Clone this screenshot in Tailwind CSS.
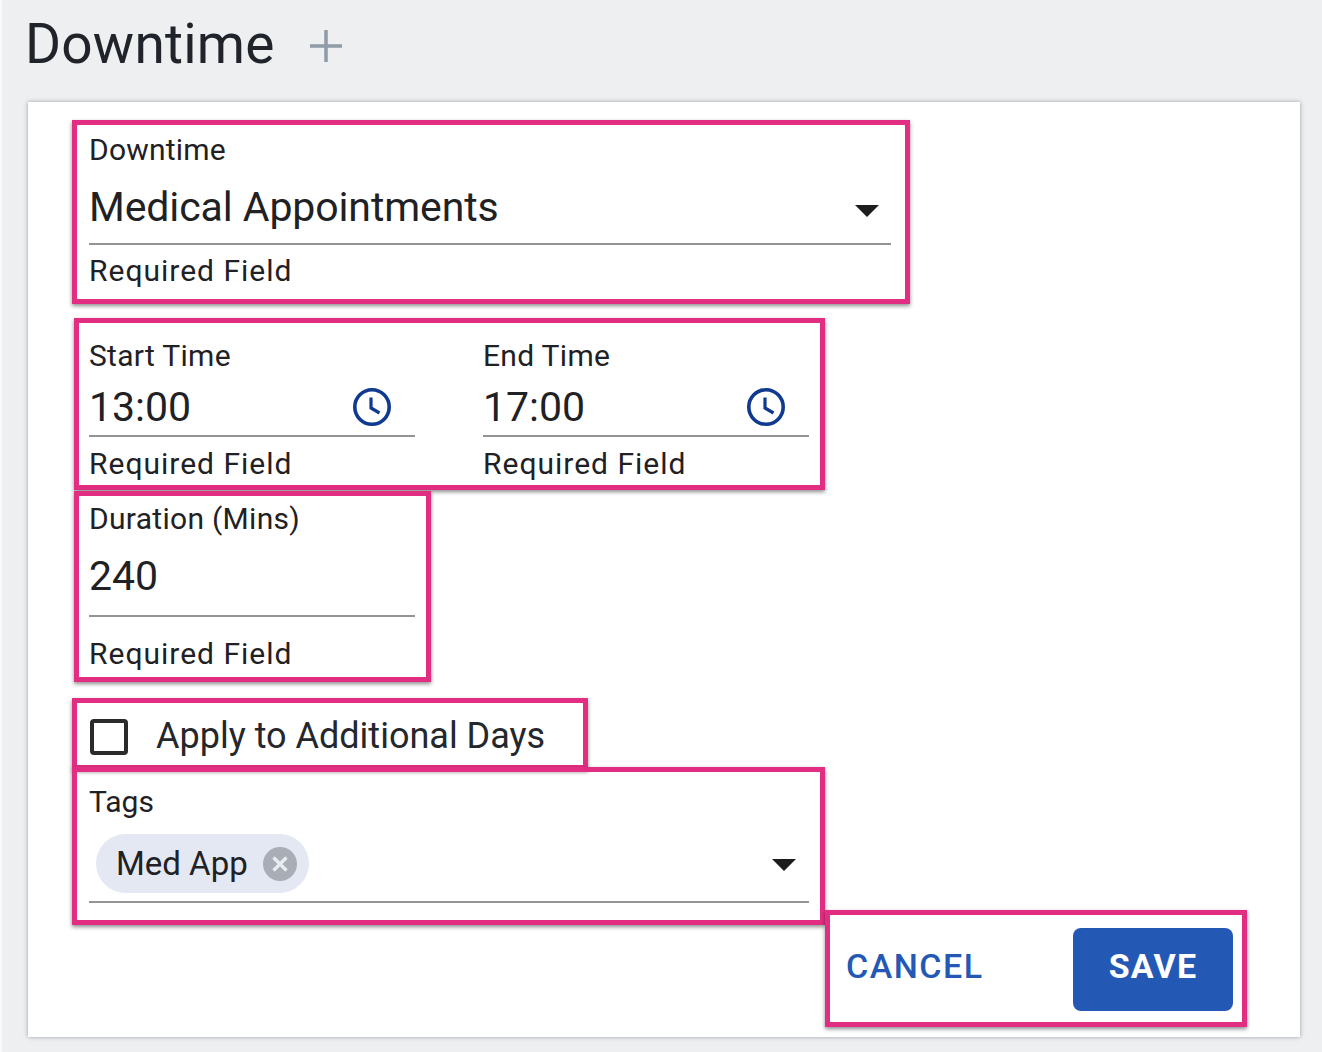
<!doctype html>
<html>
<head>
<meta charset="utf-8">
<script src="https://cdn.jsdelivr.net/npm/@tailwindcss/browser@4"></script>
</head>
<body class="m-0">
<div class="relative w-[1322px] h-[1052px] overflow-hidden bg-[#eeeff1] border-l-2 border-[#f8f9fa] font-['Roboto',sans-serif] text-[#1f2124]">
  <header class="h-[102px] pl-[23px] pt-[13px] flex items-start">
    <h1 class="text-[55px] leading-[62px] font-normal tracking-[0.2px] text-[#20242a]">Downtime</h1>
    <svg class="ml-[33px] mt-[15px] w-[36px] h-[36px]" viewBox="0 0 36 36" fill="none" stroke="#8f9ba6" stroke-width="3.5"><path d="M18 2v32M2 18h32"/></svg>
  </header>

  <main class="ml-[26px] w-[1272px] h-[935px] bg-white shadow-[0_0_4px_rgba(90,100,110,0.6)] pl-[61px] pt-[30px] flex flex-col">
    <section class="w-[802px] h-[165px] shrink-0 flex flex-col">
      <label class="text-[30px] leading-[36px] h-[36px] shrink-0 tracking-[0.2px]">Downtime</label>
      <div class="h-[77px] shrink-0 border-b-2 border-[#949494] flex items-center justify-between pr-[12px] pt-[3px]">
        <span class="text-[41px] leading-[50px] tracking-[-0.1px]">Medical Appointments</span>
        <svg class="w-[24px] h-[14px] mt-[7px]" viewBox="0 0 24 14"><path d="M0 1h24L12 13z" fill="#1d1d1d"/></svg>
      </div>
      <p class="text-[30px] leading-[36px] mt-[8px] tracking-[1px]">Required Field</p>
    </section>

    <section class="mt-[41px] flex gap-[68px] shrink-0">
      <div class="w-[326px] flex flex-col">
        <label class="text-[30px] leading-[36px] h-[36px] shrink-0 tracking-[0.3px]">Start Time</label>
        <div class="h-[63px] shrink-0 border-b-2 border-[#949494] flex items-center justify-between pr-[23px] pt-[5px]">
          <span class="text-[41px] leading-[50px]">13:00</span>
          <svg class="w-[40px] h-[40px]" viewBox="0 0 40 40" fill="none" stroke="#0f3a8f" stroke-width="3.6"><circle cx="20" cy="20" r="17.2"/><path d="M19 10.5V21l8.5 5" stroke-width="3.2"/></svg>
        </div>
        <p class="text-[30px] leading-[36px] mt-[9px] tracking-[1px]">Required Field</p>
      </div>
      <div class="w-[326px] flex flex-col">
        <label class="text-[30px] leading-[36px] h-[36px] shrink-0 tracking-[0.3px]">End Time</label>
        <div class="h-[63px] shrink-0 border-b-2 border-[#949494] flex items-center justify-between pr-[23px] pt-[5px]">
          <span class="text-[41px] leading-[50px]">17:00</span>
          <svg class="w-[40px] h-[40px]" viewBox="0 0 40 40" fill="none" stroke="#0f3a8f" stroke-width="3.6"><circle cx="20" cy="20" r="17.2"/><path d="M19 10.5V21l8.5 5" stroke-width="3.2"/></svg>
        </div>
        <p class="text-[30px] leading-[36px] mt-[9px] tracking-[1px]">Required Field</p>
      </div>
    </section>

    <section class="mt-[19px] w-[326px] shrink-0 flex flex-col">
      <label class="text-[30px] leading-[36px] h-[36px] shrink-0 whitespace-nowrap tracking-[0.3px]">Duration (Mins)</label>
      <div class="h-[80px] shrink-0 border-b-2 border-[#949494] flex items-center">
        <span class="text-[41px] leading-[50px]">240</span>
      </div>
      <p class="text-[30px] leading-[36px] mt-[19px] tracking-[1px]">Required Field</p>
    </section>

    <section class="mt-[46px] h-[38px] shrink-0 flex items-center">
      <span class="ml-[1px] w-[38px] h-[36px] border-[4px] border-[#2b2b2b] rounded-[4px]"></span>
      <span class="ml-[28px] -mt-[3px] text-[36px] leading-[44px] text-[#24272c]">Apply to Additional Days</span>
    </section>

    <section class="mt-[28px] w-[720px] shrink-0 flex flex-col">
      <label class="text-[30px] leading-[36px] h-[36px] shrink-0">Tags</label>
      <div class="h-[83px] shrink-0 border-b-2 border-[#949494] flex items-start justify-between pr-[13px]">
        <span class="ml-[7px] mt-[14px] h-[59px] w-[213px] rounded-full bg-[#e3e8f3] flex items-center pl-[20px]">
          <span class="text-[33px] leading-[40px] whitespace-nowrap">Med App</span>
          <svg class="ml-[15px] w-[34px] h-[34px] shrink-0" viewBox="0 0 34 34"><circle cx="17" cy="17" r="17" fill="#a9adb5"/><path d="M10.5 10.5l13 13M23.500 10.500l-13 13" stroke="#e8ebf2" stroke-width="3.4"/></svg>
        </span>
        <svg class="w-[24px] h-[14px] mt-[38px]" viewBox="0 0 24 14"><path d="M0 1h24L12 13z" fill="#1d1d1d"/></svg>
      </div>
    </section>

    <section class="mt-[25px] ml-[757px] w-[387px] h-[83px] shrink-0 flex items-center justify-between">
      <button class="pb-[8px] text-[34px] leading-[40px] font-medium tracking-[1.5px] text-[#2359b5]">CANCEL</button>
      <button class="w-[160px] h-[83px] pb-[8px] rounded-[8px] bg-[#2359b5] text-white text-[34px] leading-[40px] font-bold tracking-[1.2px]">SAVE</button>
    </section>
  </main>

  <!-- annotation frames that lie over the form -->
  <div class="absolute left-[70px] top-[120px] w-[838px] h-[184px] border-[5px] border-[#e22e82] shadow-[0_2px_4px_rgba(0,0,0,0.45)]"></div>
  <div class="absolute left-[72px] top-[318px] w-[751px] h-[172px] border-[5px] border-[#e22e82] shadow-[0_2px_4px_rgba(0,0,0,0.45)]"></div>
  <div class="absolute left-[72px] top-[491px] w-[357px] h-[191px] border-[5px] border-[#e22e82] shadow-[0_2px_4px_rgba(0,0,0,0.45)]"></div>
  <div class="absolute left-[70px] top-[698px] w-[516px] h-[72px] border-[5px] border-[#e22e82] shadow-[0_2px_4px_rgba(0,0,0,0.45)]"></div>
  <div class="absolute left-[70px] top-[767px] w-[753px] h-[158px] border-[5px] border-[#e22e82] shadow-[0_2px_4px_rgba(0,0,0,0.45)]"></div>
  <div class="absolute left-[823px] top-[910px] w-[422px] h-[117px] border-[5px] border-[#e22e82] shadow-[0_2px_4px_rgba(0,0,0,0.45)]"></div>
</div>
</body>
</html>
